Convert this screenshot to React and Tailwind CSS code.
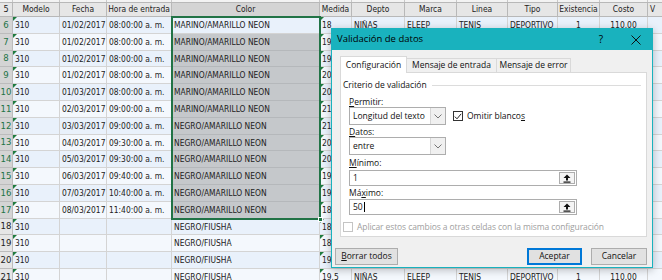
import React from 'react';

const cols = [
  { key: 'modelo', label: 'Modelo', w: 'w-[47px]', align: 'text-left', flag: true },
  { key: 'fecha', label: 'Fecha', w: 'w-[47px]', align: 'text-left' },
  { key: 'hora', label: 'Hora de entrada', w: 'w-[65px]', align: 'text-left' },
  { key: 'color', label: 'Color', w: 'w-[148px]', align: 'text-left' },
  { key: 'medida', label: 'Medida', w: 'w-[32px]', align: 'text-left', flag: true },
  { key: 'depto', label: 'Depto', w: 'w-[53px]', align: 'text-left' },
  { key: 'marca', label: 'Marca', w: 'w-[52px]', align: 'text-left' },
  { key: 'linea', label: 'Linea', w: 'w-[51px]', align: 'text-left' },
  { key: 'tipo', label: 'Tipo', w: 'w-[50px]', align: 'text-left' },
  { key: 'exist', label: 'Existencia', w: 'w-[42px]', align: 'text-center' },
  { key: 'costo', label: 'Costo', w: 'w-[48px]', align: 'text-center' },
  { key: 'v', label: 'V', w: 'w-[40px]', align: 'text-left' },
];

const fechas = [
  ['01/02/2017', '08:00:00 a. m.', 'MARINO/AMARILLO NEON', '18'],
  ['01/02/2017', '08:00:00 a. m.', 'MARINO/AMARILLO NEON', '19'],
  ['01/02/2017', '08:00:00 a. m.', 'MARINO/AMARILLO NEON', '19'],
  ['01/02/2017', '08:00:00 a. m.', 'MARINO/AMARILLO NEON', '20'],
  ['01/03/2017', '08:00:00 a. m.', 'MARINO/AMARILLO NEON', '20'],
  ['02/03/2017', '09:00:00 a. m.', 'MARINO/AMARILLO NEON', '21'],
  ['03/03/2017', '09:00:00 a. m.', 'NEGRO/AMARILLO NEON', '21'],
  ['04/03/2017', '09:30:00 a. m.', 'NEGRO/AMARILLO NEON', '20'],
  ['05/03/2017', '09:30:00 a. m.', 'NEGRO/AMARILLO NEON', '20'],
  ['06/03/2017', '09:40:00 a. m.', 'NEGRO/AMARILLO NEON', '19'],
  ['07/03/2017', '10:40:00 a. m.', 'NEGRO/AMARILLO NEON', '19'],
  ['08/03/2017', '11:40:00 a. m.', 'NEGRO/AMARILLO NEON', '18'],
  ['', '', 'NEGRO/FIUSHA', '18'],
  ['', '', 'NEGRO/FIUSHA', '18'],
  ['', '', 'NEGRO/FIUSHA', '19'],
  ['', '', 'NEGRO/FIUSHA', '19.5'],
];

const rows = fechas.map(([fecha, hora, color, medida], i) => ({
  n: i + 6,
  modelo: '310',
  fecha,
  hora,
  color,
  medida,
  depto: 'NIÑAS',
  marca: 'ELEEP',
  linea: 'TENIS',
  tipo: 'DEPORTIVO',
  exist: '1',
  costo: '110.00',
  v: '',
}));

function Flag() {
  return (
    <span className="absolute left-0 top-0 h-0 w-0 border-t-[4px] border-r-[4px] border-t-[#1e7b3e] border-r-transparent" />
  );
}

function Sheet() {
  return (
    <div className="flex flex-col font-['DejaVu_Sans_Condensed','DejaVu_Sans',sans-serif] text-[8.4px] text-[#222]">
      {/* strip above headers */}
      <div className="flex h-[3px] border-b border-[#b8b8b8] bg-[#f3f3f3]">
        <div className="w-[13px] shrink-0 border-r border-[#c8c8c8]" />
        {cols.map((c) => (
          <div key={c.key} className={`${c.w} shrink-0 border-r border-[#c8c8c8]`} />
        ))}
      </div>

      {/* column headers */}
      <div className="flex h-[14px] bg-[#e6e6e6]">
        <div className="flex w-[13px] shrink-0 items-center justify-center border-r border-b border-[#b8b8b8] text-[9px] text-[#222]">
          5
        </div>
        {cols.map((c) => (
          <div
            key={c.key}
            className={`${c.w} flex shrink-0 items-center overflow-hidden whitespace-nowrap border-r border-b border-[#b8b8b8] px-[2px] ${
              c.key === 'v' ? 'justify-start' : 'justify-center'
            } ${c.key === 'color' ? 'bg-[#d4d4d4]' : ''}`}
          >
            {c.label}
          </div>
        ))}
      </div>

      {rows.map((r) => {
        const sel = r.n <= 17;
        const band = r.n % 2 === 0 ? 'bg-[#e9f1fb]' : 'bg-[#f4f8fd]';
        return (
          <div key={r.n} className="flex h-[16.8px]">
            <div
              className={`flex w-[13px] shrink-0 items-center justify-center border-r border-b border-[#bcbcbc] text-[9.5px] ${
                sel ? 'bg-[#d4d4d4] text-[#217346]' : 'bg-[#e6e6e6] text-[#222]'
              }`}
            >
              {r.n}
            </div>
            {cols.map((c) => {
              const inSel = c.key === 'color' && sel && r.n !== 6;
              return (
                <div
                  key={c.key}
                  className={`${c.w} ${c.align} relative shrink-0 overflow-hidden whitespace-nowrap border-r border-b px-[2px] leading-[16px] ${
                    inSel ? 'border-[#b5b8bb] bg-[#c5c8cb]' : `border-[#d4d4d4] ${band}`
                  }`}
                >
                  {c.flag && <Flag />}
                  {r[c.key]}
                </div>
              );
            })}
          </div>
        );
      })}
    </div>
  );
}

function Chevron() {
  return (
    <svg width="8" height="5" viewBox="0 0 8 5" fill="none">
      <path d="M0.5 0.5 L4 4 L7.5 0.5" stroke="#666" strokeWidth="0.9" />
    </svg>
  );
}

function Select({ value }) {
  return (
    <div className="flex h-[18px] w-[97px] items-stretch border border-[#adadad] bg-white">
      <div className="flex flex-1 items-center pl-[3px]">{value}</div>
      <div className="flex w-[15px] items-center justify-center border-l border-[#d6d6d6] bg-[#f0f0f0]">
        <Chevron />
      </div>
    </div>
  );
}

function RangeInput({ value, caret }) {
  return (
    <div className="flex h-[16px] w-[228px] items-stretch border border-[#adadad] bg-white">
      <div className="flex flex-1 items-center pl-[3px]">
        {value}
        {caret && <span className="ml-px h-[10px] w-px bg-black" />}
      </div>
      <div className="m-px flex w-[16px] items-center justify-center border border-[#adadad] bg-[#f4f4f4]">
        <svg width="8" height="9" viewBox="0 0 8 9" fill="#111">
          <path d="M4 0.5 L7.5 4 H5 V6.5 H3 V4 H0.5 Z" />
          <rect x="0.5" y="7.5" width="7" height="1.2" />
        </svg>
      </div>
    </div>
  );
}

function Dialog() {
  return (
    <div className="absolute left-[331px] top-[28px] flex h-[240px] w-[322px] flex-col border border-[#19b2be] bg-[#f0f0f0] font-['Open_Sans','Noto_Sans',sans-serif] text-[8.5px] text-[#111] shadow-[0_2px_8px_rgba(0,0,0,0.25)]">
      {/* title bar */}
      <div className="flex h-[21px] items-center bg-[#19b2be] pl-[5px] text-[9.5px] text-black">
        <span>Validación de datos</span>
        <span className="ml-auto mr-[28px] text-[10px]">?</span>
        <svg className="mr-[11px]" width="10" height="10" viewBox="0 0 10 10">
          <path d="M0.5 0.5 L9.5 9.5 M9.5 0.5 L0.5 9.5" stroke="#111" strokeWidth="1" />
        </svg>
      </div>

      {/* tabs */}
      <div className="ml-[8px] mt-[6px] flex h-[16px] items-end">
        <div className="relative z-10 -mb-px flex h-[17px] w-[67px] items-center justify-center border border-b-0 border-[#d9d9d9] bg-white">
          Configuración
        </div>
        <div className="flex h-[14px] w-[90px] items-center justify-center border border-b-0 border-l-0 border-[#d9d9d9] bg-[#f0f0f0]">
          Mensaje de entrada
        </div>
        <div className="flex h-[14px] w-[74px] items-center justify-center border border-b-0 border-l-0 border-[#d9d9d9] bg-[#f0f0f0]">
          Mensaje de error
        </div>
      </div>

      {/* panel */}
      <div className="ml-[8px] flex h-[165px] w-[307px] flex-col border border-[#d9d9d9] bg-white">
        <div className="mt-[6px] flex items-center pl-[2px] leading-[12px]">
          <span>Criterio de validación</span>
          <span className="ml-[5px] mr-[5px] h-px flex-1 bg-[#dcdcdc]" />
        </div>

        <div className="flex flex-col pl-[8px]">
          <div className="mt-[5px] leading-[11px]">
            <span className="underline">P</span>ermitir:
          </div>
          <div className="flex items-center">
            <Select value="Longitud del texto" />
            <div className="ml-[7px] flex items-center">
              <span className="flex h-[10px] w-[10px] items-center justify-center border border-[#333] bg-white">
                <svg width="8" height="7" viewBox="0 0 8 7" fill="none">
                  <path d="M0.8 3.6 L3 5.8 L7.2 0.8" stroke="#222" strokeWidth="1" />
                </svg>
              </span>
              <span className="ml-[4px]">
                Omitir blanco<span className="underline">s</span>
              </span>
            </div>
          </div>

          <div className="mt-[1px] leading-[11px]">
            <span className="underline">D</span>atos:
          </div>
          <Select value="entre" />

          <div className="mt-[2px] leading-[11px]">
            <span className="underline">M</span>ínimo:
          </div>
          <div className="mt-[2px]">
            <RangeInput value="1" />
          </div>

          <div className="mt-[1px] leading-[11px]">
            Má<span className="underline">x</span>imo:
          </div>
          <div className="mt-[1px]">
            <RangeInput value="50" caret />
          </div>
        </div>

        <div className="mt-[6px] flex items-center pl-[2px] text-[#a0a0a0]">
          <span className="h-[10px] w-[10px] border border-[#c4c4c4] bg-white" />
          <span className="ml-[4px] tracking-[-0.1px]">Aplicar estos cambios a otras celdas con la misma configuración</span>
        </div>
      </div>

      {/* buttons */}
      <div className="mt-[11px] flex items-center pl-[3px] pr-[5px]">
        <button className="flex h-[17px] w-[63px] items-center justify-center border border-[#adadad] bg-[#e1e1e1]">
          <span className="underline">B</span>orrar todos
        </button>
        <button className="ml-auto flex h-[17px] w-[55px] items-center justify-center border border-[#0078d7] bg-[#e1e1e1] shadow-[inset_0_0_0_1px_#0078d7]">
          Aceptar
        </button>
        <button className="ml-[9px] flex h-[17px] w-[56px] items-center justify-center border border-[#adadad] bg-[#e1e1e1]">
          Cancelar
        </button>
      </div>
    </div>
  );
}

export default function App() {
  return (
    <div className="relative h-[280px] w-[662px] overflow-hidden bg-white">
      <Sheet />

      {/* selection outline on Color column */}
      <div className="pointer-events-none absolute left-[171px] top-[16px] h-[204px] w-[150px] border-2 border-[#217346]" />
      <div className="absolute left-[318px] top-[217px] h-[5px] w-[5px] border border-white bg-[#217346]" />

      <Dialog />
    </div>
  );
}
